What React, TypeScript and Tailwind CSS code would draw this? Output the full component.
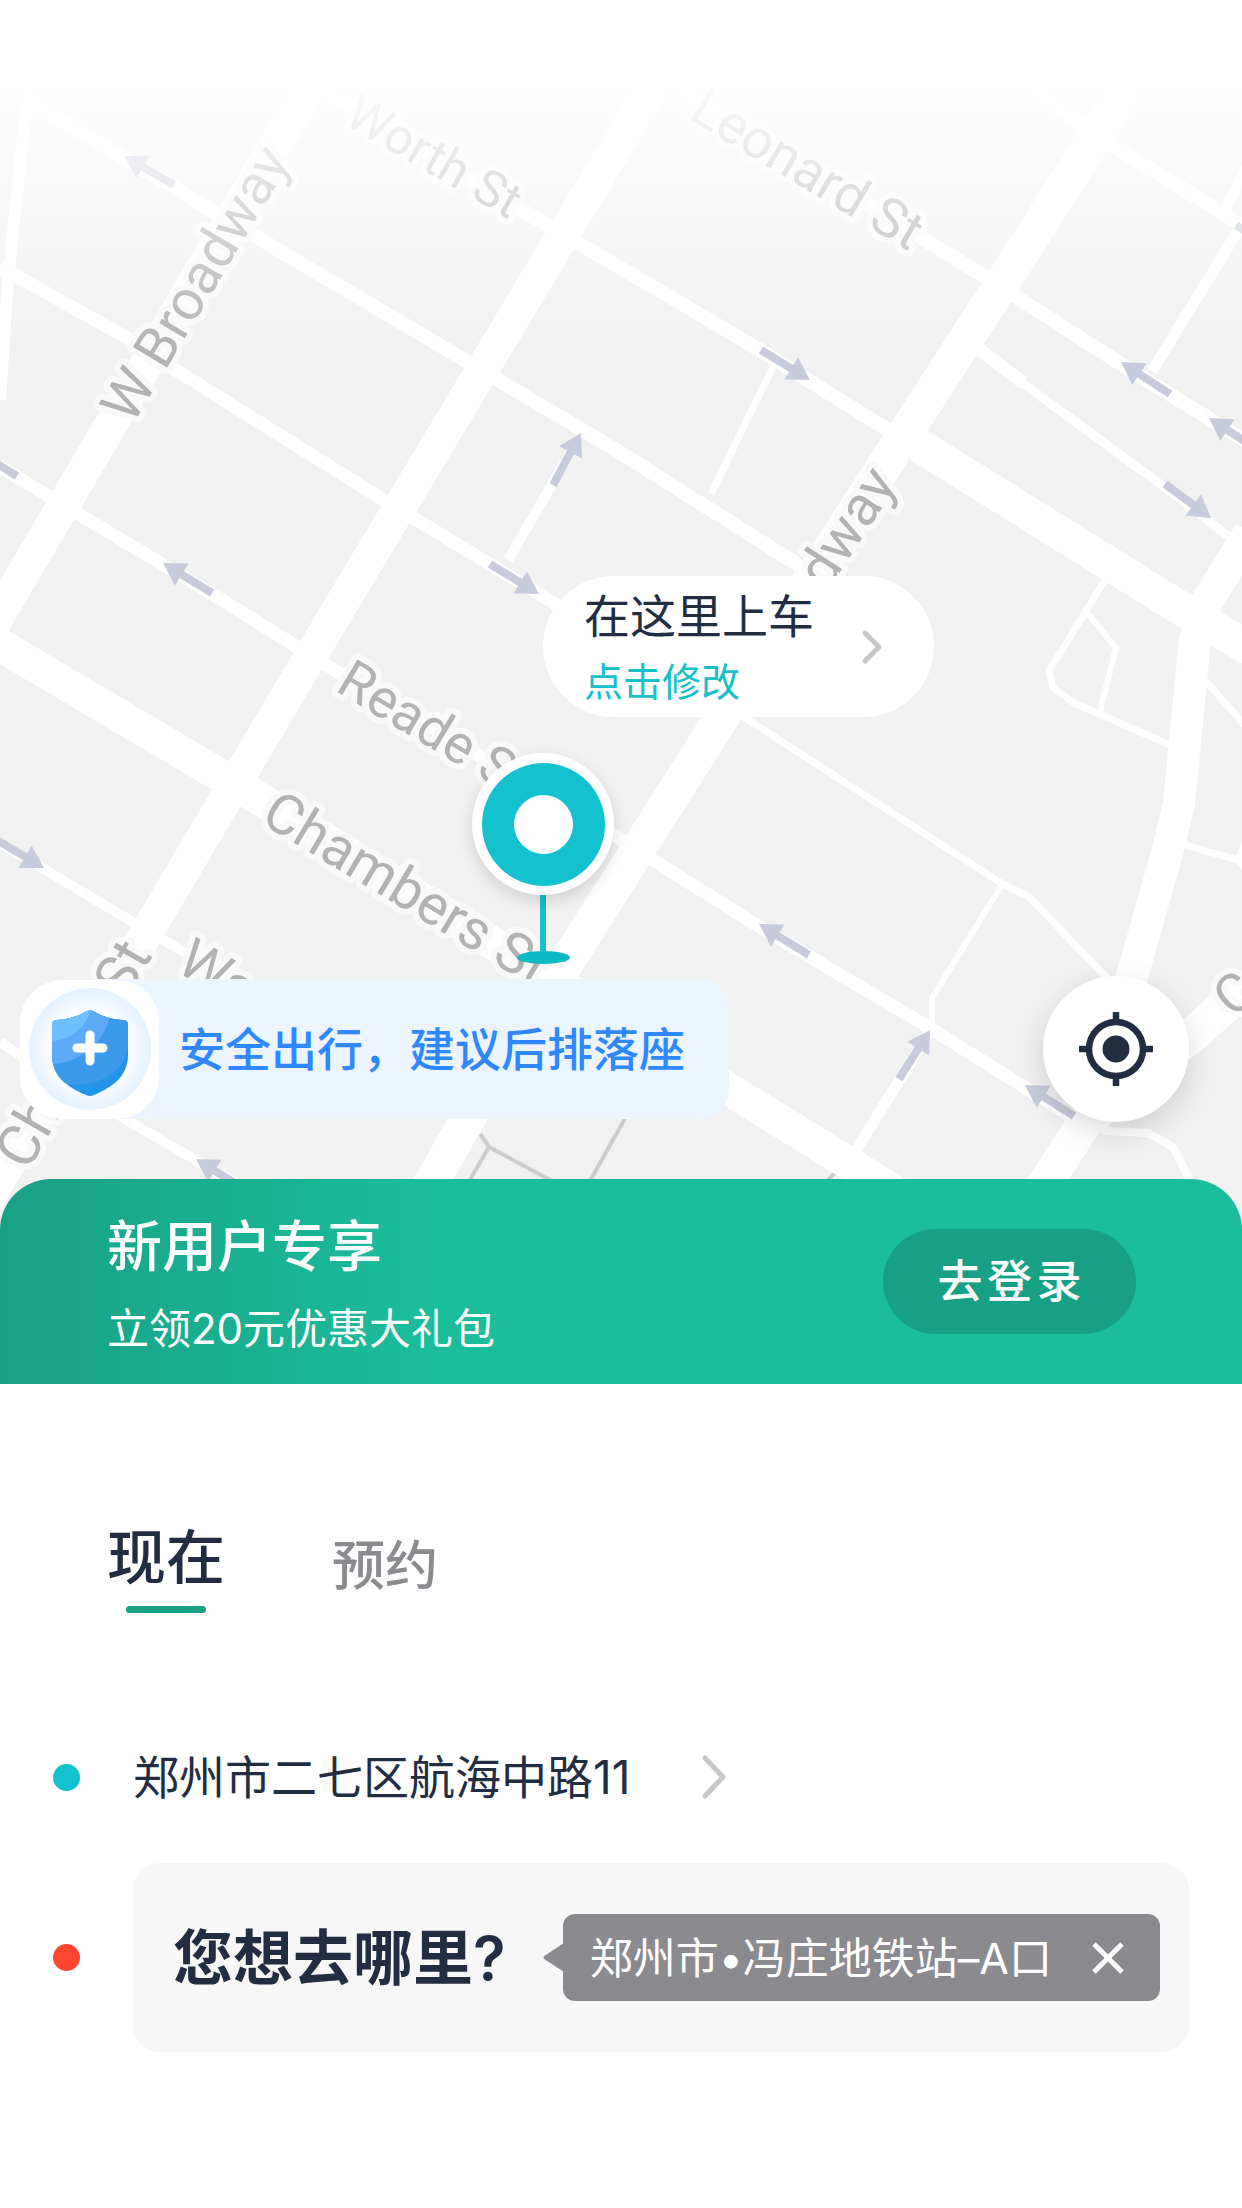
import React, { useState } from "react";

type Road = { d: string; w: number };

const roads: Road[] = [
  { d: "M310 86 L63 506 L-10 630", w: 33 },
  { d: "M653 86 L565 232 L332 620 L243 770 L151 925 L-20 1212", w: 33 },
  { d: "M1128 86 L1001 285 L910 426 L722 717 L468 1118 L424 1196", w: 35 },
  { d: "M-10 639 L0 645 L250 793 L730 1090 L905 1198", w: 33 },
  { d: "M900 433 L928 451 L1182 609 L1250 649", w: 34 },
  { d: "M1250 532 L1206 603 L1195 640 L1179 803 L1169 846 L1131 980 L1112 1090", w: 32 },
  { d: "M1250 983 L1189 1038 L1130 1082 L1083 1125 L1040 1192", w: 35 },
  { d: "M24 98 L253 235 L468 362 L621 453 L795 563 L812 575", w: 14 },
  { d: "M0 267 L131 340 L174 369 L382 499 L554 603 L730 712", w: 13 },
  { d: "M0 467 L50 497 L222 600 L326 665 L617 837 L653 860 L763 929 L930 1028 L1072 1117", w: 13 },
  { d: "M315 86 L530 215 L621 268 L758 349 L888 430", w: 14 },
  { d: "M676 86 L920 237 L987 278 L1124 366 L1250 444", w: 14 },
  { d: "M1035 90 L1113 146 L1250 230", w: 14 },
  { d: "M1225 210 L1250 160", w: 10 },
  { d: "M1238 231 L1152 371", w: 11 },
  { d: "M970 342 L1023 383", w: 13 },
  { d: "M1021 382 L1171 492 L1228 536", w: 9 },
  { d: "M28 90 L8 280 L0 400", w: 12 },
  { d: "M773 367 L711 494", w: 7 },
  { d: "M578 440 L508 560", w: 10 },
  { d: "M725 705 L1001 883 L1029 897 L1108 979", w: 7 },
  { d: "M1105 580 L1049 671 L1053 688 L1074 703 L1170 745", w: 7 },
  { d: "M1086 611 L1116 648 L1100 711", w: 6 },
  { d: "M1205 680 L1250 731", w: 7 },
  { d: "M1185 845 L1238 860 L1248 836 M1238 860 L1250 874", w: 7 },
  { d: "M1003 883 L932 998 L932 1025", w: 6 },
  { d: "M930 1031 L856 1150", w: 11 },
  { d: "M0 843 L131 921 L182 951 L470 1128", w: 10 },
  { d: "M0 1042 L20 1055 L127 1120 L250 1192", w: 10 },
  { d: "M1102 1131 L1148 1133 L1173 1147 L1198 1196", w: 8 },
];

const arrows: [number, number, number, number][] = [
  [124, 156, 174, 185],
  [581, 433, 553, 485],
  [163, 563, 212, 593],
  [539, 594, 490, 564],
  [-32, 446, 17, 476],
  [810, 380, 761, 350],
  [1121, 362, 1170, 394],
  [1209, 418, 1258, 450],
  [1211, 518, 1165, 484],
  [1285, 257, 1236, 225],
  [44, 868, -5, 839],
  [196, 1159, 244, 1189],
  [759, 924, 809, 955],
  [930, 1030, 899, 1079],
  [1025, 1085, 1074, 1116],
];

type Label = { t: string; x: number; y: number; a: number; size: number; anchor?: "end" };

const labels: Label[] = [
  { t: "W Broadway", x: 132, y: 426, a: -59, size: 56 },
  { t: "Worth St", x: 342, y: 123, a: 30, size: 50 },
  { t: "Leonard St", x: 687, y: 118, a: 31, size: 54 },
  { t: "Broadway", x: 898, y: 483, a: -57, size: 56, anchor: "end" },
  { t: "Reade St", x: 334, y: 690, a: 31, size: 54 },
  { t: "Chambers St", x: 259, y: 822, a: 31, size: 56 },
  { t: "Church St", x: 153, y: 955, a: -60, size: 58, anchor: "end" },
  { t: "Warren St", x: 174, y: 970, a: 31, size: 56 },
  { t: "Centre St", x: 1234, y: 1019, a: -42, size: 54 },
];

function StreetMap() {
  return (
    <svg
      className="absolute inset-0 h-full w-full"
      viewBox="0 88 1242 1152"
      preserveAspectRatio="xMidYMin slice"
      aria-hidden="true"
    >
      <rect x="-600" y="88" width="2442" height="1152" fill="#f1f1f1" />
      <g fill="none" stroke="#ccc" strokeWidth="4">
        <path d="M480 1134 L489 1147 L565 1188 M489 1147 L464 1190" />
        <path d="M632 1106 L586 1188 M837 1171 L824 1184" />
      </g>
      <g fill="none" stroke="#fff" strokeLinejoin="round">
        {roads.map((r) => (
          <path key={r.d} d={r.d} strokeWidth={r.w} />
        ))}
      </g>
      <g fill="#c8cbdc">
        {arrows.map(([tx, ty, sx, sy]) => {
          const len = Math.hypot(sx - tx, sy - ty);
          const deg = (Math.atan2(ty - sy, tx - sx) * 180) / Math.PI;
          return (
            <g key={`${tx}-${ty}`} transform={`translate(${tx} ${ty}) rotate(${deg})`}>
              <path d="M0 0 L-22 -13 L-22 13 Z" />
              <rect x={-len} y="-4" width={len - 21} height="8" />
            </g>
          );
        })}
      </g>
      <g
        fill="#b2b2b2"
        stroke="#f9f9f9"
        strokeWidth="12"
        strokeLinejoin="round"
        paintOrder="stroke"
        fontFamily="Roboto, sans-serif"
      >
        {labels.map((l) => (
          <text
            key={l.t}
            transform={`translate(${l.x} ${l.y}) rotate(${l.a})`}
            fontSize={l.size}
            textAnchor={l.anchor}
          >
            {l.t}
          </text>
        ))}
      </g>
    </svg>
  );
}

function Chevron({ className }: { className: string }) {
  return (
    <svg className={className} viewBox="0 0 24 44" fill="none" aria-hidden="true">
      <path d="M3 3 L21 22 L3 41" stroke="#c8c8cc" strokeWidth="5" strokeLinecap="round" strokeLinejoin="round" />
    </svg>
  );
}

function Pin() {
  return (
    <div className="absolute left-[472px] top-[665px] flex w-[142px] flex-col items-center">
      <div className="z-10 flex size-[142px] items-center justify-center rounded-full bg-white shadow-[0_6px_16px_rgba(0,0,0,0.14)]">
        <div className="flex size-[123px] items-center justify-center rounded-full bg-[#14c1ce]">
          <div className="size-[59px] rounded-full bg-white" />
        </div>
      </div>
      <div className="h-[56px] w-[6px] bg-[#14c1ce]" />
      <div className="h-[13px] w-[53px] rounded-[50%] bg-[#0bbac5]" />
    </div>
  );
}

function Shield() {
  return (
    <svg className="mt-2 h-[86px] w-[76px]" viewBox="0 0 76 86" aria-hidden="true">
      <defs>
        <clipPath id="shield">
          <path d="M34 1.500 Q38 -0.500 42 1.500 Q55 9.500 71 10 Q76 10 76 15 V45 C76 66 61 77 42 85 Q38 87 34 85 C15 77 0 66 0 45 V15 Q0 10 5 10 Q21 9.500 34 1.500Z" />
        </clipPath>
      </defs>
      <g clipPath="url(#shield)">
        <rect width="76" height="86" fill="#2494e8" />
        <path d="M0 0 H76 V38 C72 62 46 78 14 74 L0 66Z" fill="#3c9aec" />
        <path d="M0 0 H59 C55 30 32 52 0 54Z" fill="#5caaf8" />
        <path d="M0 0 H39 C33 18 20 29 0 31Z" fill="#6dc0ff" />
      </g>
      <path d="M38 25 V51 M25 38 H51" stroke="#fff" strokeWidth="9" strokeLinecap="round" />
    </svg>
  );
}

function SafetyTip() {
  return (
    <div className="flex items-center">
      <div className="z-10 flex size-[139px] items-center justify-center rounded-[42px] bg-white">
        <div className="flex size-[122px] items-center justify-center rounded-full bg-[radial-gradient(circle,#ffffff_42%,#e6f2ff_68%)]">
          <Shield />
        </div>
      </div>
      <p className="-ml-[70px] rounded-r-[30px] bg-[#ecf5ff] py-[40px] pl-[90px] pr-[44px] text-[46px] font-medium leading-[60px] text-[#2f88ff]">
        安全出行，建议后排落座
      </p>
    </div>
  );
}

function LocateButton() {
  return (
    <button
      type="button"
      aria-label="定位"
      className="flex size-[146px] items-center justify-center rounded-full bg-white shadow-[0_10px_30px_rgba(0,0,0,0.15)]"
    >
      <svg className="size-[74px]" viewBox="0 0 74 74" fill="none" stroke="#232d42" aria-hidden="true">
        <circle cx="37" cy="37" r="27" strokeWidth="6.500" />
        <circle cx="37" cy="37" r="13.500" fill="#232d42" stroke="none" />
        <path d="M37 0 V9 M37 65 V74 M0 37 H9 M65 37 H74" strokeWidth="6.500" />
      </svg>
    </button>
  );
}

function MapSection() {
  return (
    <section className="relative h-[1152px] overflow-hidden">
      <StreetMap />
      <div className="absolute inset-x-0 top-0 h-[260px] bg-linear-to-b from-white/95 to-white/0" />
      <button
        type="button"
        className="absolute left-[543px] top-[488px] flex h-[141px] items-center gap-[48px] rounded-full bg-white pl-[41px] pr-[52px] text-left"
      >
        <span className="flex flex-col gap-2 pt-1">
          <span className="text-[46px] leading-[58px] text-[#232d42]">在这里上车</span>
          <span className="text-[39px] leading-[58px] text-[#14c1c9]">点击修改</span>
        </span>
        <svg className="h-[34px] w-[20px]" viewBox="0 0 20 34" fill="none" aria-hidden="true">
          <path d="M3 3 L17 17 L3 31" stroke="#c8c8cc" strokeWidth="5" strokeLinecap="round" strokeLinejoin="round" />
        </svg>
      </button>
      <Pin />
      <div className="absolute inset-x-0 top-[888px] flex items-center justify-between pl-[20px] pr-[53px]">
        <SafetyTip />
        <LocateButton />
      </div>
    </section>
  );
}

function LoginBanner() {
  return (
    <section className="relative -mt-[61px] flex items-center justify-between rounded-t-[51px] bg-linear-to-r from-[#18a085] to-[#1cbd9d] to-35% py-[30px] pl-[107px] pr-[106px] text-white">
      <div className="flex flex-col gap-6 pt-1">
        <h2 className="text-[55px] font-medium leading-[66px]">新用户专享</h2>
        <p className="text-[42px] leading-[51px]">立领20元优惠大礼包</p>
      </div>
      <button
        type="button"
        className="h-[105px] rounded-full bg-[#17a085] pl-[54px] pr-[50px] text-[45px] font-medium tracking-widest"
      >
        去登录
      </button>
    </section>
  );
}

export default function App() {
  const [tab, setTab] = useState<"now" | "book">("now");
  return (
    <main className="min-h-screen bg-white pt-[88px] font-['Inter','Noto_Sans_CJK_SC',sans-serif]">
      <MapSection />
      <LoginBanner />
      <div role="tablist" className="flex items-start gap-[107px] pl-[107px] pt-[138px]">
        <button
          type="button"
          role="tab"
          aria-selected={tab === "now"}
          onClick={() => setTab("now")}
          className="flex flex-col items-center gap-3 text-[59px] font-medium leading-[72px] text-[#232d42]"
        >
          现在
          <span className="h-[7px] w-[80px] rounded-full bg-[#17a085]" />
        </button>
        <button
          type="button"
          role="tab"
          aria-selected={tab === "book"}
          onClick={() => setTab("book")}
          className="pt-2 text-[53px] font-medium leading-[72px] text-[#8b8a8f]"
        >
          预约
        </button>
      </div>
      <div className="mt-[136px] grid grid-cols-[27px_1fr] items-center gap-x-[53px] gap-y-[58px] px-[53px]">
        <span className="size-[27px] rounded-full bg-[#14c1ce]" />
        <button type="button" className="flex items-center gap-[72px] text-[46px] leading-[56px] text-[#232d42]">
          郑州市二七区航海中路11
          <Chevron className="h-[44px] w-[24px]" />
        </button>
        <span className="size-[27px] rounded-full bg-[#ff4630]" />
        <div className="flex items-center justify-between rounded-[27px] bg-[#f7f7f7] py-[51px] pl-[40px] pr-[29px]">
          <button type="button" className="text-[60px] font-semibold leading-[72px] text-[#232d42]">
            您想去哪里?
          </button>
          <div className="relative flex h-[87px] items-center gap-[40px] rounded-[12px] bg-[#8b8a8f] pl-[27px] pr-[36px] text-white">
            <svg className="absolute -left-[20px] top-[29px] h-[29px] w-[21px]" viewBox="0 0 21 29" aria-hidden="true">
              <path d="M21 0 L2 12.500 Q-1 14.500 2 16.500 L21 29Z" fill="#8b8a8f" />
            </svg>
            <button type="button" className="text-[43px] leading-[56px]">
              郑州市•冯庄地铁站–A口
            </button>
            <button type="button" aria-label="关闭">
              <svg className="size-[32px]" viewBox="0 0 32 32" fill="none" aria-hidden="true">
                <path d="M2 2 L30 30 M30 2 L2 30" stroke="#fff" strokeWidth="5" />
              </svg>
            </button>
          </div>
        </div>
      </div>
    </main>
  );
}
